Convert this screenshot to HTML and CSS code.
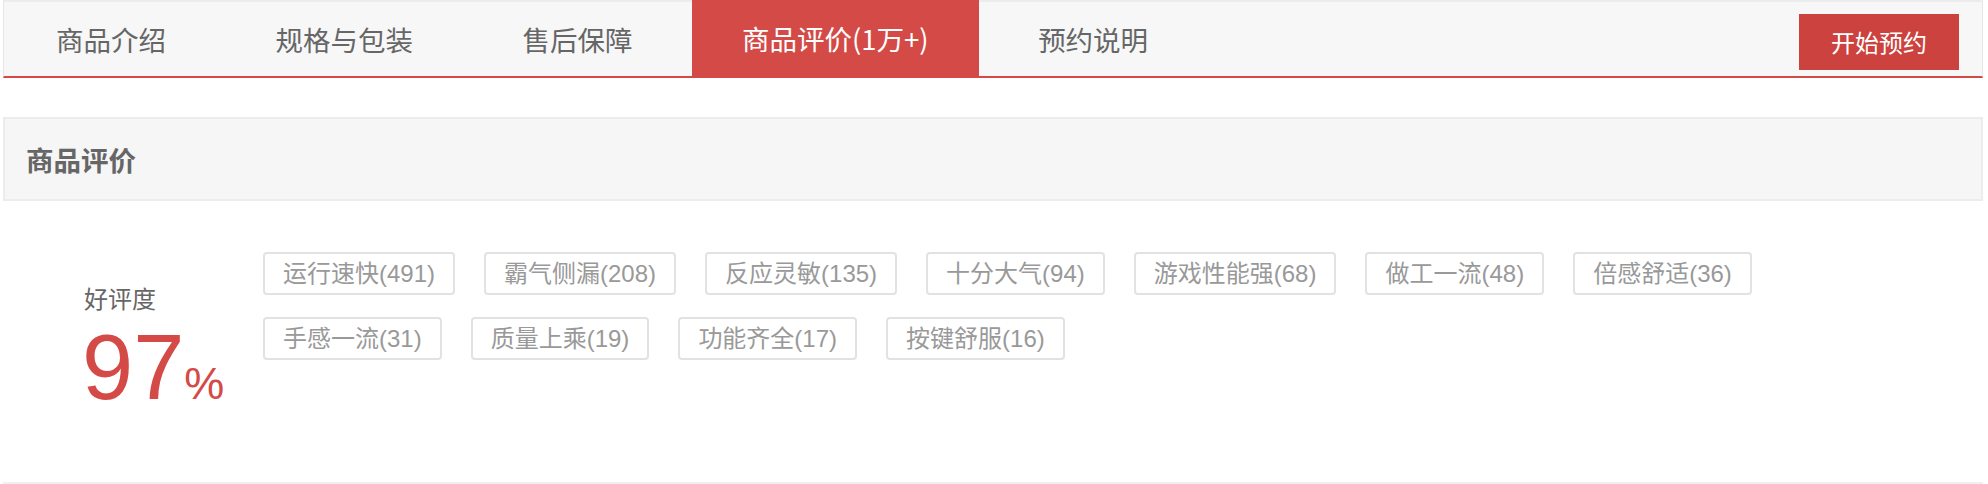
FILE: index.html
```html
<!DOCTYPE html>
<html lang="zh-CN">
<head>
<meta charset="utf-8">
<title>商品评价</title>
<link rel="stylesheet" href="styles.css">
</head>
<body>
<div class="wrap">
  <nav class="tabbar">
    <a class="tab">商品介绍</a>
    <a class="tab">规格与包装</a>
    <a class="tab">售后保障</a>
    <a class="tab active">商品评价(1万+)</a>
    <a class="tab">预约说明</a>
    <a class="btn">开始预约</a>
  </nav>

  <div class="section-head">商品评价</div>

  <div class="summary">
    <div class="score">
      <div class="score-label">好评度</div>
      <div class="score-num">97<span class="pct">%</span></div>
    </div>
    <div class="tags">
      <span class="tag">运行速快(491)</span>
      <span class="tag">霸气侧漏(208)</span>
      <span class="tag">反应灵敏(135)</span>
      <span class="tag">十分大气(94)</span>
      <span class="tag">游戏性能强(68)</span>
      <span class="tag">做工一流(48)</span>
      <span class="tag">倍感舒适(36)</span>
      <span class="tag">手感一流(31)</span>
      <span class="tag">质量上乘(19)</span>
      <span class="tag">功能齐全(17)</span>
      <span class="tag">按键舒服(16)</span>
    </div>
  </div>
</div>
</body>
</html>
```

FILE: styles.css
```css
html, body {
  margin: 0;
  padding: 0;
  background: #fff;
}

body {
  font-family: "Liberation Sans", "Noto Sans CJK SC", sans-serif;
  color: #666;
}

.wrap {
  width: 1980px;
  margin: 0 5px 0 3px;
}

/* top tab bar */
.tabbar {
  display: flex;
  align-items: flex-start;
  gap: 9.5px;
  height: 74px;
  padding-left: 2px;
  background: #f7f7f7;
  border-top: 2px solid #ececec;
  border-left: 1px solid #e6e6e6;
  border-right: 1px solid #e6e6e6;
  border-bottom: 2px solid #d44a46;
  font-family: "Noto Sans CJK SC", sans-serif;
}

.tab {
  display: block;
  padding: 0 50px;
  line-height: 74px;
  font-size: 27.5px;
  color: #666;
  white-space: nowrap;
}

.tab.active {
  margin-top: -2px;
  line-height: 76px;
  background: #d44a46;
  color: #fff;
}

.btn {
  margin-left: auto;
  margin-right: 23px;
  margin-top: 12px;
  width: 160px;
  height: 56px;
  line-height: 56px;
  text-align: center;
  background: #cc423e;
  color: #fff;
  font-size: 24px;
}

/* section header */
.section-head {
  margin-top: 39px;
  height: 80px;
  line-height: 80px;
  padding-left: 21px;
  background: #f6f6f6;
  border: 2px solid #ececec;
  font-family: "Noto Sans CJK SC", sans-serif;
  font-weight: bold;
  font-size: 27.5px;
  color: #666;
}

/* rating summary */
.summary {
  display: flex;
  align-items: flex-start;
  height: 230px;
  padding: 51px 0 0 81px;
  border-bottom: 2px solid #f0f0f0;
}

.score {
  width: 179px;
  flex: none;
}

.score-label {
  margin-top: 30px;
  line-height: 36px;
  font-size: 24px;
  color: #666;
}

.score-num {
  margin-top: 3px;
  margin-left: -2px;
  line-height: 92px;
  font-size: 92px;
  color: #d44a46;
  white-space: nowrap;
}

.pct {
  font-size: 45px;
}

.tags {
  display: flex;
  flex-wrap: wrap;
  gap: 22px 29px;
  width: 1600px;
}

.tag {
  display: block;
  height: 39px;
  line-height: 39px;
  padding: 0 18px;
  border: 2px solid #e2e2e2;
  border-radius: 4px;
  font-size: 24px;
  color: #999;
  white-space: nowrap;
}
```
